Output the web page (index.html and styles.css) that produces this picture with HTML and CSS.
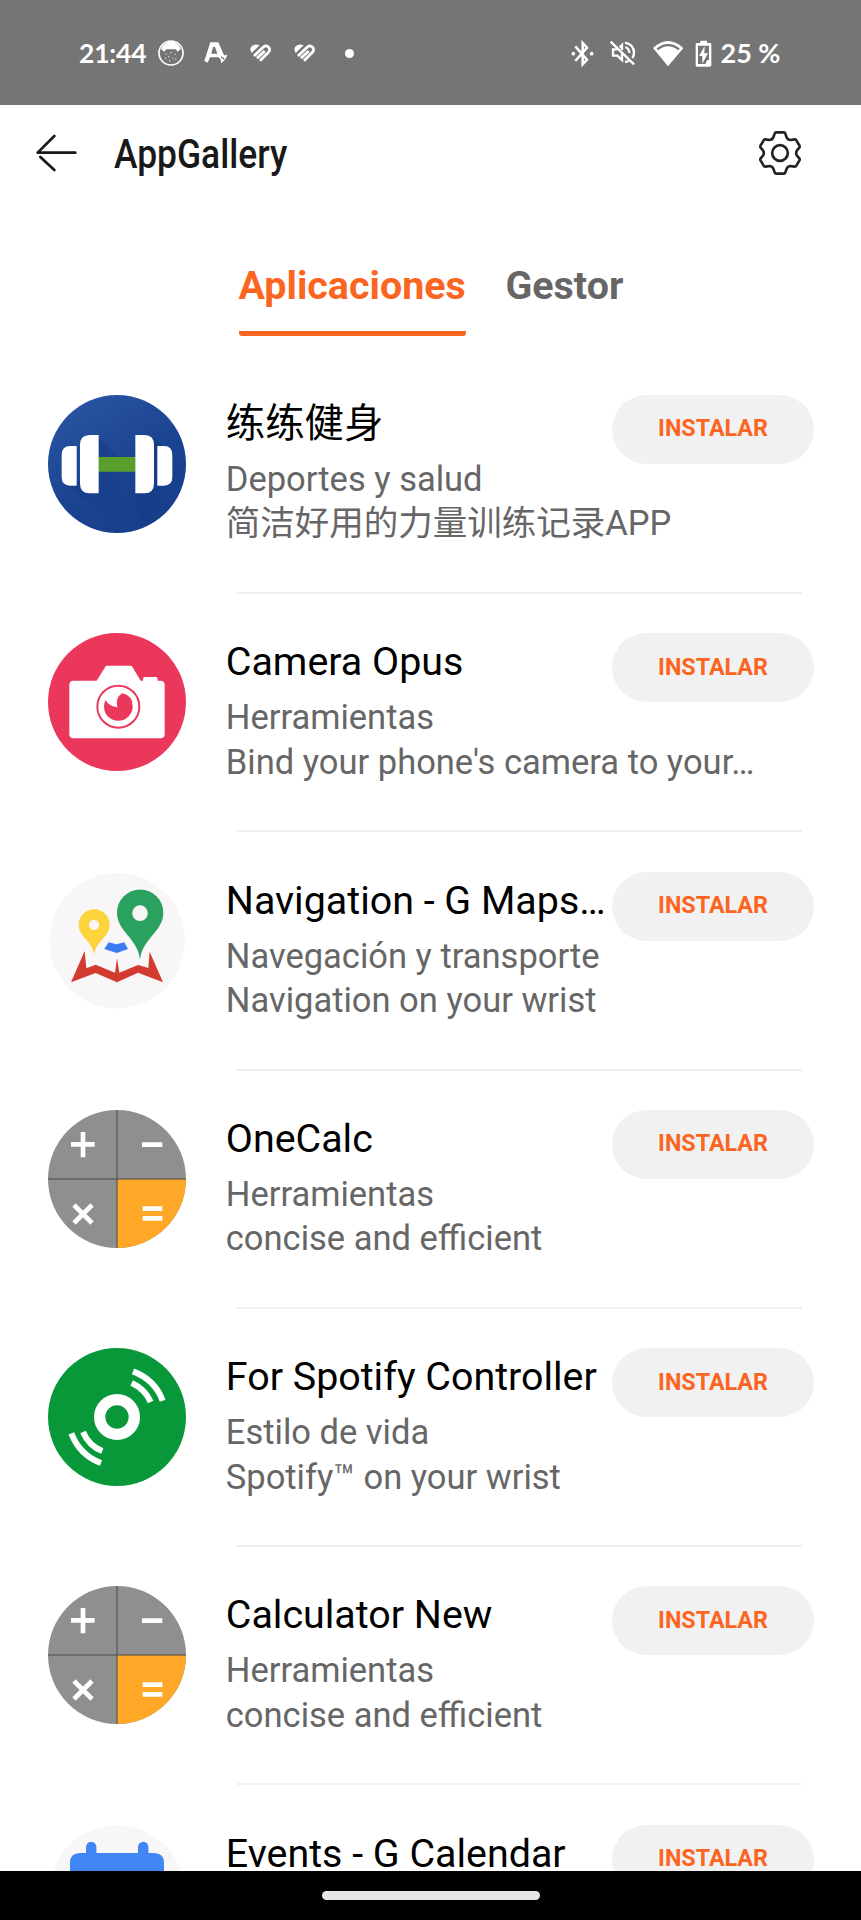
FILE: index.html
```html
<!DOCTYPE html>
<html lang="es">
<head>
<meta charset="utf-8">
<title>AppGallery</title>
<link rel="stylesheet" href="styles.css">
</head>
<body>
<svg width="0" height="0" class="defs" aria-hidden="true">
  <defs>
    <symbol id="health" viewBox="565 70 67 60">
      <path d="M573 100Q565 87 574 79Q584 71 597 77Z" fill="#fff"/>
      <g fill="none" stroke="#fff" stroke-width="8.500">
        <path d="M580 109 605 85Q616 74 623 82Q631 90 622 99L598 123"/>
        <path d="M589 116 612 94"/>
      </g>
    </symbol>
    <symbol id="calc" viewBox="55 43 414 414">
      <circle cx="262" cy="250" r="207" fill="#8f8f8f"/>
      <path d="M262 250H469A207 207 0 0 1 262 457Z" fill="#ffa726"/>
      <path d="M262 43V457M55 250H469" stroke="#4b4b4b" stroke-width="3"/>
      <path d="M124 146H195M160 109V185M337 147H398M339 339H398M339 368H398M133 328 187 382M187 328 133 382" stroke="#fff" stroke-width="14" fill="none"/>
    </symbol>
  </defs>
</svg>
<div class="screen">
  <header class="status">
    <span class="clock">21:44</span>
    <svg class="st-face" viewBox="293 61 78 78"><circle cx="332" cy="100" r="36" fill="none" stroke="#fff" stroke-width="5"/><path d="M302 88Q310 68 332 65Q354 68 361 88L352 96 346 89H318L312 96Z" fill="#fff"/><g fill="#c8c8c8"><circle cx="318" cy="103" r="2.500"/><circle cx="332" cy="99" r="2.500"/><circle cx="345" cy="104" r="2.500"/><circle cx="325" cy="111" r="2.500"/><circle cx="338" cy="115" r="2.500"/><circle cx="328" cy="123" r="2.500"/><circle cx="346" cy="118" r="2.500"/><circle cx="316" cy="116" r="2.500"/></g></svg>
    <svg class="st-alpha" viewBox="430 64 72 72"><path fill-rule="evenodd" d="M449 68H473L490 107 500 106 494 119 482 131 480 120 474 113H448L441 129 431 124ZM457 82 452 102H470L463 82Z" fill="#fff"/><path d="M481 111 491 119" stroke="#757575" stroke-width="4"/></svg>
    <svg class="st-heart"><use href="#health"/></svg>
    <svg class="st-heart"><use href="#health"/></svg>
    <i class="st-dot"></i>
    <svg class="st-bt" viewBox="62 58 69 81"><path d="M75 77 110 117 97 131V67L110 81 75 121" fill="none" stroke="#fff" stroke-width="7.500"/><circle cx="69" cy="99" r="5.500" fill="#fff"/><circle cx="124" cy="99" r="5.500" fill="#fff"/></svg>
    <svg class="st-mute" viewBox="180 62 78 78"><g fill="none" stroke="#fff" stroke-width="7"><path d="M182 67 252 135"/><path d="M202 90H189V109H202L216 122V101M209 84 216 77V92"/><path d="M225 70Q252 76 252 100Q252 109 247 116M226 83Q238 88 238 101M225 128Q233 127 238 123"/></g></svg>
    <svg class="st-wifi" viewBox="309 58 92 80"><path d="M309 82Q354 40 400 82L354 137Z" fill="#fff"/><path d="M322 86Q354 61 387 86" fill="none" stroke="#757575" stroke-width="7"/></svg>
    <svg class="st-bat" viewBox="437 56 51 82"><path d="M453 58H473V65H482Q486 65 486 69V132Q486 136 482 136H443Q439 136 439 132V69Q439 65 443 65H453Z" fill="#fff"/><path d="M446 73H479V116H474L468 128H446Z" fill="#757575"/><path d="M466 74 449 104H459V127L476 96H465Z" fill="#fff"/></svg>
    <span class="charge">25 %</span>
  </header>

  <div class="bar">
    <svg class="back" viewBox="108 99 126 120"><path d="M163 108 113 158H226M121 171 163 210" fill="none" stroke="#191919" stroke-width="8" stroke-linecap="round" stroke-linejoin="round"/></svg>
    <h1>AppGallery</h1>
    <svg class="gear" viewBox="985 90 132 138"><g fill="none" stroke="#222" stroke-width="8" stroke-linejoin="round"><path d="M1040 97H1062Q1066 97 1067 101L1071 112Q1074 120 1083 120L1094 118Q1098 117 1100 121L1109 136Q1111 140 1109 143L1102 151Q1097 159 1102 167L1109 175Q1111 178 1109 182L1100 197Q1098 201 1094 200L1083 198Q1074 198 1071 206L1067 217Q1066 221 1062 221H1040Q1036 221 1035 217L1031 206Q1028 198 1019 198L1008 200Q1004 201 1002 197L993 182Q991 178 993 175L1000 167Q1005 159 1000 151L993 143Q991 140 993 136L1002 121Q1004 117 1008 118L1019 120Q1028 120 1031 112L1035 101Q1036 97 1040 97Z"/><circle cx="1051" cy="159" r="23.500"/></g></svg>
  </div>

  <nav class="tabs">
    <a class="tab active">Aplicaciones</a>
    <a class="tab">Gestor</a>
  </nav>

  <main class="list">
    <article class="app">
      <svg class="icon" viewBox="55 44 414 414"><defs><linearGradient id="blue" x1="0" y1="0" x2=".6" y2="1"><stop offset="0" stop-color="#2c58a5"/><stop offset=".6" stop-color="#1b4491"/><stop offset="1" stop-color="#183f8c"/></linearGradient><linearGradient id="shade" x1="0" y1="0" x2="1" y2="1"><stop offset="0" stop-color="#12367e" stop-opacity=".75"/><stop offset="1" stop-color="#183f8c" stop-opacity="0"/></linearGradient><clipPath id="disc"><circle cx="262" cy="251" r="207"/></clipPath></defs><circle cx="262" cy="251" r="207" fill="url(#blue)"/><g clip-path="url(#disc)" fill="url(#shade)"><path d="M205 170 330 295 320 420H240L104 312 150 300Z"/><path d="M372 170 480 270V430H330L320 338Z"/></g><path d="M206 230H318V274H206Z" fill="#5a9e2b"/><g fill="#fff"><path d="M141 197V316H121Q96 316 96 290V224Q96 197 122 197ZM207 164V339H180Q151 339 151 309V194Q151 164 180 164ZM317 164H345Q373 164 373 194V309Q373 339 345 339H317ZM383 197H403Q428 197 428 224V290Q428 316 403 316H383Z"/></g></svg>
      <div class="info"><h2>练练健身</h2><p>Deportes y salud</p><p>简洁好用的力量训练记录APP</p></div>
      <button>INSTALAR</button>
    </article>
    <article class="app">
      <svg class="icon" viewBox="55 40 414 414"><circle cx="262" cy="247" r="207" fill="#eb375b"/><path d="M119 196Q119 183 132 183H201L229 138H306L333 183H340V178Q340 172 346 172H378Q384 172 384 178V183H392Q405 183 405 196V343Q405 356 392 356H132Q119 356 119 343Z" fill="#fff"/><circle cx="266" cy="261" r="63" fill="none" stroke="#eb375b" stroke-width="6"/><path d="M228 241Q238 260 263 263Q256 235 277 221Q309 227 309 260A43 43 0 0 1 223 261Q223 249 228 241Z" fill="#eb375b"/></svg>
      <div class="info"><h2>Camera Opus</h2><p>Herramientas</p><p>Bind your phone's camera to your…</p></div>
      <button>INSTALAR</button>
    </article>
    <article class="app">
      <svg class="icon" viewBox="55 35 414 414"><circle cx="262" cy="241" r="203" fill="#f8f6f7"/><path fill-rule="evenodd" d="M331 298C325 234 262 213 262 157A69.500 69.500 0 0 1 401 157C401 213 338 234 331 298ZM331 135A23.500 23.500 0 1 0 331 182A23.500 23.500 0 1 0 331 135Z" fill="#2aa15f"/><path fill-rule="evenodd" d="M193 284C189 242 147 230 147 193A46 46 0 0 1 240 193C240 230 198 242 193 284ZM193 178A15.500 15.500 0 1 0 193 209A15.500 15.500 0 1 0 193 178Z" fill="#fdd43b"/><path d="M237 246 260 252 284 246 295 266 261 278 224 266Z" fill="#3d7bf3"/><path d="M165 272 170 324 198 313 256 337 262 294 269 337 325 314 356 323 360 274 400 366 325 337 262 366 198 338 124 366Z" fill="#d33a30"/></svg>
      <div class="info"><h2>Navigation - G Maps…</h2><p>Navegación y transporte</p><p>Navigation on your wrist</p></div>
      <button>INSTALAR</button>
    </article>
    <article class="app">
      <svg class="icon"><use href="#calc"/></svg>
      <div class="info"><h2>OneCalc</h2><p>Herramientas</p><p>concise and efficient</p></div>
      <button>INSTALAR</button>
    </article>
    <article class="app">
      <svg class="icon" viewBox="55 38 414 414"><circle cx="262" cy="245" r="207" fill="#08983a"/><circle cx="262" cy="245" r="52" fill="none" stroke="#fff" stroke-width="34"/><g fill="none" stroke="#fff" stroke-width="18"><path d="M310 108Q376 133 399 196M306 143Q346 161 363 200M125 294Q150 359 214 383M160 290Q178 332 218 347"/></g></svg>
      <div class="info"><h2>For Spotify Controller</h2><p>Estilo de vida</p><p>Spotify™ on your wrist</p></div>
      <button>INSTALAR</button>
    </article>
    <article class="app">
      <svg class="icon"><use href="#calc"/></svg>
      <div class="info"><h2>Calculator New</h2><p>Herramientas</p><p>concise and efficient</p></div>
      <button>INSTALAR</button>
    </article>
    <article class="app">
      <svg class="icon" viewBox="0 0 138 138"><circle cx="69" cy="68" r="67.500" fill="#f8f6f7"/><path d="M22 130V38Q22 28 32 28H38V22A5.200 5.200 0 0 1 48.400 22V28H90V22A5.200 5.200 0 0 1 100.400 22V28H106Q116 28 116 38V130Z" fill="#4286f5"/></svg>
      <div class="info"><h2>Events - G Calendar</h2></div>
      <button>INSTALAR</button>
    </article>
  </main>
  <footer class="home"><i></i></footer>
</div>
</body>
</html>
```
FILE: styles.css
```css
* { box-sizing: border-box; }
body { margin: 0; background: #fff; font-family: Roboto, "Noto Sans CJK SC", sans-serif; }
h1, h2, p { margin: 0; font-weight: 400; white-space: nowrap; }
svg { display: block; flex: none; }
.defs { position: absolute; }
.screen { width: 861px; height: 1920px; display: flex; flex-direction: column; overflow: hidden; }

.status { flex: none; height: 104.7px; padding: 2px 0 0 79px; display: flex; align-items: center; background: #757575; color: #fff; font: 700 27px/30px Lato, sans-serif; }
.clock { width: 78.500px; white-space: nowrap; font-size: 26.500px; letter-spacing: -.2px; }
.st-face { width: 26px; height: 26px; }
.st-alpha { width: 24px; height: 24px; margin-left: 20px; }
.st-heart { width: 22.300px; height: 20px; margin-left: 21px; }
.st-heart + .st-heart { margin-left: 22.700px; }
.st-dot { width: 9px; height: 9px; margin-left: 29.500px; border-radius: 50%; background: #fff; }
.st-bt { width: 23px; height: 27px; margin-left: 216.500px; }
.st-mute { width: 26px; height: 26px; margin-left: 16px; }
.st-wifi { width: 30.700px; height: 26.700px; margin-left: 17px; }
.st-bat { width: 17px; height: 27.300px; margin-left: 12px; }
.charge { margin-left: 8px; white-space: nowrap; }

.bar { flex: none; height: 96px; display: flex; align-items: center; padding: 0 59px 0 36px; }
.back { width: 42px; height: 40px; }
h1 { margin-left: 36px; width: 200px; flex: 1; font-size: 40px; font-weight: 500; line-height: 48px; color: #191919; transform: scaleX(.885); transform-origin: 0 50%; padding-top: 5px; }
.gear { width: 44px; height: 46px; }

.tabs { flex: none; height: 194.300px; padding: 56px 0 0 238.500px; display: flex; gap: 39.500px; align-items: flex-start; }
.tab { height: 79px; font-size: 39.400px; font-weight: 700; line-height: 57px; color: #666; white-space: nowrap; }
.tab.active { width: 227.500px; color: #fb6522; border-bottom: 5.300px solid #fb6522; border-radius: 0 0 3px 3px; }

.list { flex: 1; min-height: 0; overflow: hidden; }
.app { height: 238.300px; padding: 0 47px 0 48.300px; display: flex; align-items: flex-start; }
.icon { width: 138px; height: 138px; }
.info { flex: none; display: flex; flex-direction: column; width: 576px; height: 199px; margin: 0 -190.500px 0 39.500px; }
.info::after { content: ""; height: 2px; margin: auto 0 0 11px; background: #f0f0f0; }
h2 { font-size: 39.400px; line-height: 58px; color: #000; }
p { font-size: 34.500px; line-height: 44.500px; color: #666; }
h2 + p { margin-top: 4px; }
button { flex: none; margin-left: auto; width: 202px; height: 69px; padding: 0 0 2px; border: 0; border-radius: 35px; background: #f1f1f1; color: #fb6522; font: 700 23.300px/28px Roboto, sans-serif; }

.home { flex: none; height: 49px; background: #000; display: flex; justify-content: center; padding-top: 20px; }
.home i { width: 218px; height: 9px; border-radius: 5px; background: #e8e7e8; }
```
